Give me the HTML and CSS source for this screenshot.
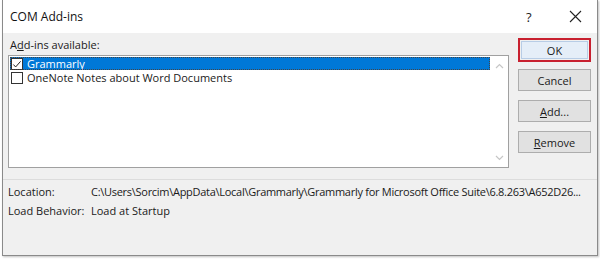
FILE: index.html
```html
<!DOCTYPE html>
<html>
<head>
<meta charset="utf-8">
<link rel="stylesheet" href="styles.css">
</head>
<body>
<div class="dialog">
  <div class="titlebar">
    <span class="title">COM Add-ins</span>
    <span class="help">?</span>
    <svg class="close" width="13" height="13" viewBox="0 0 13 13"><path d="M1 1L12 12M12 1L1 12" stroke="#222" stroke-width="1.1" fill="none"/></svg>
  </div>
  <div class="body">
    <div class="top">
      <div class="left">
        <div class="label">A<u>d</u>d-ins available:</div>
        <div class="listbox">
          <div class="items">
            <div class="row sel"><span class="cb"><svg width="11" height="11" viewBox="0 0 11 11"><path d="M1.5 5.5L4 8.2L9.5 2" stroke="#222" stroke-width="1.1" fill="none"/></svg></span><span class="txt">Grammarly</span></div>
            <div class="row"><span class="cb"></span><span class="txt">OneNote Notes about Word Documents</span></div>
          </div>
          <div class="scroll">
            <svg width="9" height="6" viewBox="0 0 9 6"><path d="M1 5L4.5 1.5L8 5" stroke="#c6c6c6" stroke-width="1.2" fill="none"/></svg>
            <svg width="9" height="6" viewBox="0 0 9 6"><path d="M1 1L4.5 4.5L8 1" stroke="#c6c6c6" stroke-width="1.2" fill="none"/></svg>
          </div>
        </div>
      </div>
      <div class="buttons">
        <div class="hl"><button class="btn ok">OK</button></div>
        <button class="btn">Cancel</button>
        <button class="btn"><u>A</u>dd...</button>
        <button class="btn"><u>R</u>emove</button>
      </div>
    </div>
    <div class="sep"></div>
    <div class="info">
      <span class="k">Location:</span><span class="v path">C:\Users\Sorcim\AppData\Local\Grammarly\Grammarly for Microsoft Office Suite\6.8.263\A652D26...</span>
      <span class="k">Load Behavior:</span><span class="v">Load at Startup</span>
    </div>
  </div>
</div>
</body>
</html>
```
FILE: styles.css
```css
* { box-sizing: border-box; }
html, body { margin: 0; padding: 0; background: #fff; }
body {
  font-family: "Open Sans", "Noto Sans", sans-serif;
  font-size: 11px;
  color: #1a1a1a;
  width: 600px;
  height: 261px;
}
.dialog {
  margin: 0 2px;
  height: 256px;
  border: 1px solid #8a8a8a;
  border-top: none;
  background: #f0f0f0;
  box-shadow: 1px 1px 2px rgba(0,0,0,0.25);
  display: flex;
  flex-direction: column;
}
.titlebar {
  height: 33px;
  background: #fff;
  display: flex;
  align-items: center;
  padding: 0 0 0 7px;
}
.title { font-size: 12px; flex: 1; color: #111; }
.help { font-size: 13px; width: 10px; margin-right: 33px; color: #222; }
.close { margin-right: 15px; }
.body { padding: 4px 6px 0 5px; flex: 1; }
.top { display: flex; gap: 9px; }
.left { width: 501px; }
.label { margin-left: 2px; height: 18px; line-height: 16px; }
.label u, .btn u { text-decoration: underline; text-underline-offset: 1px; }
.listbox {
  height: 113px;
  border: 1px solid #a0a0a0;
  background: #fff;
  display: flex;
  padding: 1px 0 0 1px;
}
.items { flex: 1; }
.row { height: 14px; display: flex; align-items: center; line-height: 14px; }
.row.sel { height: 13px; margin-bottom: 1px; background: #0078d7; outline: 1px dotted #444; outline-offset: -1px; color: #fff; }
.cb {
  width: 12px; height: 12px;
  border: 1px solid #333;
  background: #fff;
  margin: 0 4px 0 1px;
  display: flex;
}
.cb svg { display: block; }
.scroll {
  width: 18px;
  display: flex;
  flex-direction: column;
  justify-content: space-between;
  align-items: center;
  padding: 6px 0 6px;
}
.buttons {
  width: 73px;
  display: flex;
  flex-direction: column;
  gap: 9px;
  margin-top: 1px;
}
.hl { border: 2px solid #c8202f; height: 24px; padding: 1px; margin-bottom: -2px; }
.btn {
  width: 73px; height: 22px;
  font: inherit;
  background: #e1e1e1;
  border: 1px solid #adadad;
  color: #1a1a1a;
  padding: 0;
}
.btn.ok { width: 67px; height: 18px; background: #e5eef8; border: 1px solid #b8cde6; }
.sep { height: 1px; background: #dcdcdc; margin: 11px -6px 0 -5px; }
.info {
  display: grid;
  grid-template-columns: 83px 1fr;
  row-gap: 4px;
  padding: 4px 0 0 0;
  line-height: 15px;
}
.v { white-space: nowrap; }
.path { letter-spacing: -0.28px; }
```
